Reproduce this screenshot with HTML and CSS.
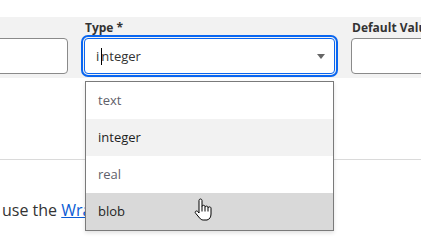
FILE: index.html
```html
<!DOCTYPE html>
<html lang="en">
<head>
<meta charset="utf-8">
<title>Column type</title>
<link rel="stylesheet" href="styles.css">
</head>
<body>
<div class="top-space"></div>
<div class="band">
  <div class="field field-name">
    <div class="label"></div>
    <div class="input"></div>
  </div>
  <div class="field field-type">
    <div class="label">Type *</div>
    <div class="select">
      <span class="value">i<span class="caret"></span>nteger</span>
      <span class="arrow"></span>
    </div>
  </div>
  <div class="field field-default">
    <div class="label">Default Value</div>
    <div class="input"></div>
  </div>
</div>
<div class="section">
  <p class="note">use the <a href="#">Wrapper</a></p>
</div>
<ul class="listbox">
  <li class="opt opt-muted">text</li>
  <li class="opt opt-selected">integer</li>
  <li class="opt opt-muted">real</li>
  <li class="opt opt-hover">blob</li>
</ul>
<svg class="hand" width="20" height="24" viewBox="0 0 20 24">
  <path d="M5 2.5C5 1.7 5.7 1 6.5 1C7.3 1 8 1.7 8 2.5V8.6C8 7.8 8.7 7.3 9.5 7.3C10.3 7.3 11 7.8 11 8.6V9.3C11 8.6 11.7 8.1 12.5 8.1C13.3 8.1 14 8.6 14 9.3V10.1C14 9.4 14.7 8.9 15.5 8.9C16.3 8.9 17 9.4 17 10.1V16C17 19 15.6 21.4 13 22H9.2C7.7 22 6.6 21.2 5.6 20L1.6 15.2C1 14.5 1.1 13.6 1.8 13.2C2.5 12.8 3.3 13 3.8 13.6L5 15Z" fill="#fff" stroke="#000" stroke-width="1" stroke-linejoin="round"/>
  <path d="M8 8.6V13.5M11 9.3V13.5M14 10.1V13.5" fill="none" stroke="#000" stroke-width="1"/>
</svg>
</body>
</html>
```
FILE: styles.css
```css
html, body {
  margin: 0;
  padding: 0;
  background: #fff;
  font-family: "Open Sans", "Noto Sans", sans-serif;
  color: #333;
  overflow: hidden;
  width: 421px;
  height: 247px;
  position: relative;
}

.top-space {
  height: 17px;
}

.band {
  background: #f2f2f2;
  height: 61px;
  box-sizing: border-box;
  padding-top: 3px;
  display: flex;
  gap: 16px;
  white-space: nowrap;
}

.field {
  display: flex;
  flex-direction: column;
  gap: 2px;
  flex: none;
}

.field-name {
  width: 200px;
  margin-left: -132px;
}

.field-type {
  width: 251px;
}

.field-default {
  width: 200px;
}

.label {
  font-size: 12px;
  font-weight: 700;
  line-height: 16px;
  height: 16px;
  padding-left: 1px;
  color: #333;
}

.input {
  height: 36px;
  box-sizing: border-box;
  border: 1px solid #8a8a8a;
  border-radius: 4px;
  background: #fff;
}

.select {
  height: 36px;
  box-sizing: border-box;
  border: 1px solid #0a66f0;
  border-radius: 4px;
  outline: 2px solid #0a66f0;
  outline-offset: 1px;
  background: #fff;
  display: flex;
  align-items: center;
  justify-content: space-between;
  padding: 0 9px 0 11px;
  font-size: 13px;
  color: #333;
}

.value {
  line-height: 18px;
}

.caret {
  display: inline-block;
  width: 0;
  height: 17px;
  border-left: 1px solid #000;
  vertical-align: -4px;
  margin: 0 -1px 0 2px;
}

.arrow {
  width: 0;
  height: 0;
  border-left: 4px solid transparent;
  border-right: 4px solid transparent;
  border-top: 5px solid #666;
}

.section {
  margin-top: 81px;
  border-top: 1px solid #dadada;
}

.note {
  margin: 39px 0 0 2px;
  font-size: 16px;
  line-height: 22px;
  white-space: nowrap;
  color: #333;
}

.note a {
  color: #0b5cd5;
  text-decoration: underline;
}

.listbox {
  position: absolute;
  left: 85px;
  top: 81px;
  width: 249px;
  box-sizing: border-box;
  margin: 0;
  padding: 0;
  list-style: none;
  background: #fff;
  border: 1px solid #7a7a7a;
  box-shadow: 0 2px 4px rgba(0, 0, 0, 0.12);
}

.opt {
  height: 37px;
  line-height: 37px;
  padding-left: 12px;
  font-size: 13px;
  color: #1f1f1f;
}

.opt-muted {
  color: #5f5f6a;
}

.opt-selected {
  background: #f2f2f2;
}

.opt-hover {
  background: #d9d9d9;
}

.hand {
  position: absolute;
  left: 194px;
  top: 198px;
}
```
